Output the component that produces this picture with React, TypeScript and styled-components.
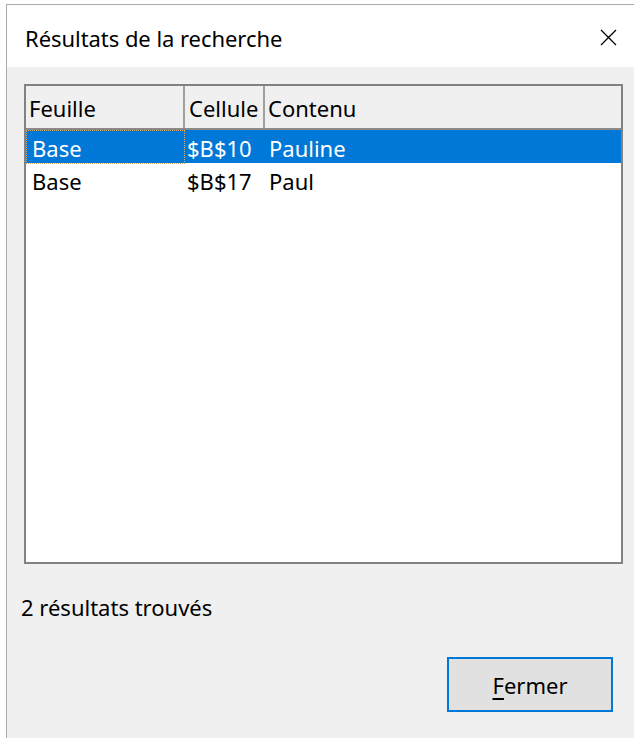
import styled, { createGlobalStyle } from "styled-components";

const GlobalStyle = createGlobalStyle`
  html, body {
    margin: 0;
    padding: 0;
    background: #ffffff;
  }
  body {
    font-family: "Noto Sans", "Open Sans", Arial, sans-serif;
    font-size: 22px;
    color: #000;
  }
`

const Window = styled.div`
  margin: 4px 0 0 6px;
  height: 734px;
  border-left: 1px solid #a9a9a9;
  border-top: 1px solid #a9a9a9;
  display: flex;
  flex-direction: column;
  box-sizing: border-box;
`

const TitleBar = styled.div`
  height: 62px;
  background: #ffffff;
  display: flex;
  align-items: center;
  justify-content: space-between;
  padding: 3px 17px 0 18px;
  box-sizing: border-box;
  flex-shrink: 0;
`

const Title = styled.span`
  font-size: 22px;
  letter-spacing: -0.05px;
`

const CloseButton = styled.button`
  border: none;
  background: transparent;
  padding: 0;
  width: 17px;
  height: 17px;
  display: flex;
  cursor: pointer;
`

const Body = styled.div`
  flex: 1;
  background: #f0f0f0;
  padding: 17px 11px 0 17px;
  display: flex;
  flex-direction: column;
`

const ListBox = styled.div`
  height: 480px;
  box-sizing: border-box;
  border: 2px solid #828282;
  background: #ffffff;
  display: flex;
  flex-direction: column;
`

const columns = "159px 80px 1fr"

const HeaderRow = styled.div`
  display: grid;
  grid-template-columns: ${columns};
  height: 42px;
  background: #f0f0f0;
  border-bottom: 2px solid #8a8a8a;
`

const HeaderCell = styled.div<{ $pad: number; $last?: boolean }>`
  display: flex;
  align-items: center;
  padding: 2px 0 0 ${(p) => p.$pad}px;
  white-space: nowrap;
  overflow: hidden;
  border-right: ${(p) => (p.$last ? "none" : "2px solid #a0a0a0")};
`

const Row = styled.div<{ $selected?: boolean }>`
  display: grid;
  grid-template-columns: ${columns};
  height: 33px;
  background: ${(p) => (p.$selected ? "#0078d7" : "transparent")};
  color: ${(p) => (p.$selected ? "#ffffff" : "#000000")};
`

const Cell = styled.div<{ $focus?: boolean; $pad: number }>`
  display: flex;
  align-items: center;
  padding: 2px 0 0 ${(p) => p.$pad}px;
  white-space: nowrap;
  box-sizing: border-box;
  border: 1px ${(p) => (p.$focus ? "dotted #d6a868" : "solid transparent")};
`

const Status = styled.div`
  margin: 28px 0 0 -3px;
`

const Footer = styled.div`
  display: flex;
  justify-content: flex-end;
  margin-top: 35px;
  padding-right: 10px;
`

const PushButton = styled.button`
  width: 166px;
  height: 55px;
  border: 2px solid #0078d7;
  background: #e1e1e1;
  font-family: inherit;
  font-size: 22px;
  color: #000;
  padding: 0;
  cursor: pointer;
  u {
    text-underline-offset: 4px;
  }
`

const results = [
  { sheet: "Base", cell: "$B$10", content: "Pauline" },
  { sheet: "Base", cell: "$B$17", content: "Paul" },
]

const App = () => {
  return (
    <>
      <GlobalStyle />
      <Window>
        <TitleBar>
          <Title>Résultats de la recherche</Title>
          <CloseButton aria-label="Fermer">
            <svg width="17" height="17" viewBox="0 0 17 17">
              <path d="M1 1 L16 16 M16 1 L1 16" stroke="#000" strokeWidth="1.3" fill="none" />
            </svg>
          </CloseButton>
        </TitleBar>
        <Body>
          <ListBox>
            <HeaderRow>
              <HeaderCell $pad={3}>Feuille</HeaderCell>
              <HeaderCell $pad={4}>Cellule</HeaderCell>
              <HeaderCell $pad={3} $last>Contenu</HeaderCell>
            </HeaderRow>
            {results.map((r, i) => (
              <Row key={i} $selected={i === 0}>
                <Cell $focus={i === 0} $pad={5}>{r.sheet}</Cell>
                <Cell $pad={1}>{r.cell}</Cell>
                <Cell $pad={3}>{r.content}</Cell>
              </Row>
            ))}
          </ListBox>
          <Status>2 résultats trouvés</Status>
          <Footer>
            <PushButton>
              <u>F</u>ermer
            </PushButton>
          </Footer>
        </Body>
      </Window>
    </>
  )
}
export default App
